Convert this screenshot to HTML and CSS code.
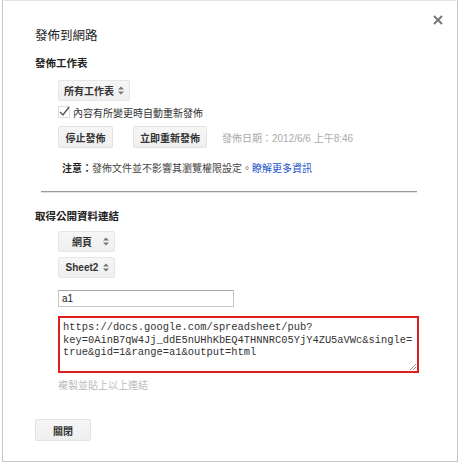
FILE: index.html
```html
<!DOCTYPE html>
<html lang="zh-Hant">
<head>
    <meta charset="UTF-8">
    <title>發佈到網路</title>
    <link rel="stylesheet" href="styles.css">
</head>
<body>
    <div class="dialog">
        <!-- Close button -->
        <span class="close-btn">
            <svg width="10" height="10" viewBox="0 0 10 10"><path d="M1 1 L9 9 M9 1 L1 9" stroke="#777" stroke-width="2"/></svg>
        </span>

        <div class="title">發佈到網路</div>

        <!-- Publish section -->
        <div class="section-title">發佈工作表</div>
        <div class="indent">
            <div class="select select-wide">
                <span class="select-label">所有工作表</span>
                <svg class="arrows" width="6" height="9" viewBox="0 0 6 9"><path d="M0 3.5 L3 0.5 L6 3.5 Z M0 5.5 L3 8.5 L6 5.5 Z" fill="#777"/></svg>
            </div>
            <div class="check-row">
                <svg width="12" height="12" viewBox="0 0 12 12"><rect x="0.5" y="0.5" width="11" height="11" fill="#fff" stroke="#ddd"/><path d="M2 6 L5 9 L11 1" fill="none" stroke="#555" stroke-width="1.4"/></svg>
                <span>內容有所變更時自動重新發佈</span>
            </div>
            <div class="button-row">
                <div class="btn btn-stop">停止發佈</div>
                <div class="btn btn-republish">立即重新發佈</div>
                <span class="pub-date">發佈日期：2012/6/6 上午8:46</span>
            </div>
            <div class="notice"><b>注意：</b>發佈文件並不影響其瀏覽權限設定。<a href="#">瞭解更多資訊</a></div>
        </div>

        <div class="divider"></div>

        <!-- Link section -->
        <div class="section-title section-title-2">取得公開資料連結</div>
        <div class="indent">
            <div class="select select-small">
                <span class="select-label">網頁</span>
                <svg class="arrows" width="6" height="9" viewBox="0 0 6 9"><path d="M0 3.5 L3 0.5 L6 3.5 Z M0 5.5 L3 8.5 L6 5.5 Z" fill="#777"/></svg>
            </div>
            <div class="select select-small select-gap">
                <span class="select-label latin">Sheet2</span>
                <svg class="arrows" width="6" height="9" viewBox="0 0 6 9"><path d="M0 3.5 L3 0.5 L6 3.5 Z M0 5.5 L3 8.5 L6 5.5 Z" fill="#777"/></svg>
            </div>
            <div class="range-input">a1</div>
            <div class="link-box">
                <div class="link-text">https://docs.google.com/spreadsheet/pub?<br>key=0AinB7qW4Jj_ddE5nUHhKbEQ4THNNRC05YjY4ZU5aVWc&amp;single=<br>true&amp;gid=1&amp;range=a1&amp;output=html</div>
                <svg class="grip" width="7" height="7" viewBox="0 0 7 7"><path d="M7 1 L1 7 M7 4 L4 7" stroke="#999" stroke-width="1"/></svg>
            </div>
            <div class="hint">複製並貼上以上連結</div>
        </div>

        <div class="btn btn-close">關閉</div>
    </div>
</body>
</html>
```

FILE: styles.css
```css
/* Global Styles */
body {
    margin: 0;
    padding: 0;
    background-color: #fff;
    font-family: "Liberation Sans", Arial, "Noto Sans CJK TC", sans-serif;
    font-size: 10px;
    color: #222;
}

/* Dialog */
.dialog {
    position: relative;
    box-sizing: border-box;
    width: 456px;
    height: 462px;
    margin-left: 2px;
    padding: 25px 0 0 32px;
    border: 1px solid #c6c6c6;
    border-top-color: #e4e4e4;
    background-color: #fff;
}

.close-btn {
    position: absolute;
    top: 14px;
    right: 14px;
    display: flex;
}

.title {
    font-size: 12.5px;
    line-height: 20px;
    color: #222;
}

.section-title {
    margin-top: 9px;
    font-size: 10.5px;
    line-height: 16px;
    font-weight: bold;
}

.section-title-2 {
    margin-top: 16px;
}

.indent {
    margin-left: 23px;
}

/* Select-like buttons */
.select {
    display: flex;
    align-items: center;
    box-sizing: border-box;
    height: 21px;
    margin-top: 9px;
    padding: 0 5px;
    border: 1px solid #e6e6e6;
    border-radius: 2px;
    background: linear-gradient(#f6f6f6, #efefef);
    font-weight: bold;
    color: #333;
    white-space: nowrap;
}

.select-wide {
    width: 72px;
}

.select-small {
    width: 57px;
    margin-top: 7px;
}

.select-gap {
    margin-top: 5px;
}

.select-label {
    flex: 1;
    text-align: center;
    padding-right: 3px;
}

.select-wide .select-label {
    text-align: left;
    padding-right: 2px;
}

.arrows {
    flex-shrink: 0;
}

.check-row {
    display: flex;
    align-items: center;
    gap: 3px;
    height: 16px;
    margin-top: 3px;
    color: #333;
}

.button-row {
    display: flex;
    align-items: center;
    margin-top: 6px;
}

.btn {
    display: flex;
    align-items: center;
    justify-content: center;
    box-sizing: border-box;
    height: 22px;
    border: 1px solid #e3e3e3;
    border-radius: 2px;
    background: linear-gradient(#f6f6f6, #efefef);
    font-weight: bold;
    color: #333;
}

.btn-stop {
    width: 55px;
}

.btn-republish {
    width: 74px;
    margin-left: 20px;
}

.pub-date {
    margin-left: 15px;
    color: #aaa;
    font-size: 10px;
}

.notice {
    margin-top: 13px;
    margin-left: 4px;
    line-height: 16px;
    color: #444;
}

.notice b {
    color: #222;
}

.notice a {
    color: #2255cc;
    text-decoration: none;
}

.divider {
    width: 376px;
    height: 1px;
    margin: 14px 0 0 6px;
    background-color: #9a9a9a;
    box-shadow: 0 1px 0 #e2e2e2;
}

/* Link fields */
.range-input {
    box-sizing: border-box;
    width: 176px;
    height: 17px;
    margin-top: 12px;
    padding: 1px 3px;
    border: 1px solid #c8c8c8;
    border-top-color: #a8a8a8;
    font-size: 10px;
    line-height: 14px;
    color: #222;
}

.latin {
    font-family: "Liberation Sans", Arial, sans-serif;
}

.link-box {
    position: relative;
    box-sizing: border-box;
    width: 361px;
    height: 57px;
    margin-top: 9px;
    padding: 3px 3px;
    border: 2px solid #dd1f1f;
}

.link-text {
    font-family: "Liberation Mono", "Courier New", monospace;
    font-size: 10.4px;
    line-height: 12.5px;
    color: #333;
}

.grip {
    position: absolute;
    right: 1px;
    bottom: 1px;
}

.hint {
    margin-top: 6px;
    line-height: 14px;
    color: #bbb;
}

.btn-close {
    width: 56px;
    margin-top: 26px;
}
```
